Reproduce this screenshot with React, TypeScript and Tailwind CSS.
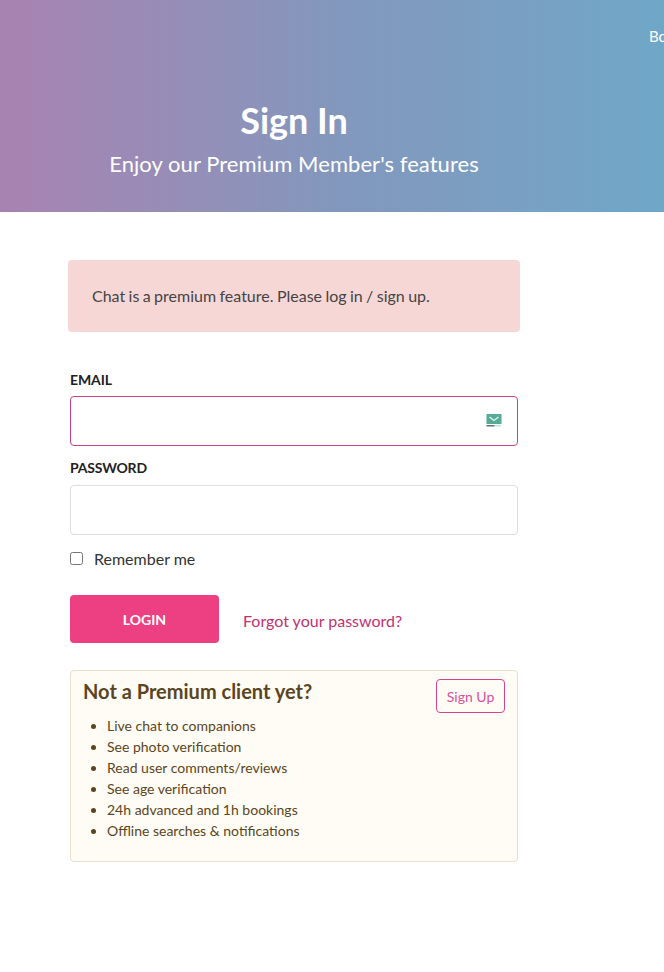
import * as React from 'react';

const perks = [
  'Live chat to companions',
  'See photo verification',
  'Read user comments/reviews',
  'See age verification',
  '24h advanced and 1h bookings',
  'Offline searches & notifications',
];

function MailBadge() {
  return (
    <svg width="16" height="14" viewBox="0 0 16 14" className="shrink-0">
      <rect x="0.5" y="0" width="15" height="10" fill="#56ab96" />
      <path d="M3.5 3 L8 6.5 L12.5 3" fill="none" stroke="#e3f4ee" strokeWidth="1.3" />
      <rect x="0.5" y="11" width="8" height="1.5" fill="#5c7676" />
      <rect x="9" y="11" width="6" height="1.5" fill="#bfe6da" />
    </svg>
  );
}

export default function App() {
  return (
    <div className="w-[664px] h-[972px] overflow-hidden bg-white font-['Lato','Carlito','Open_Sans',sans-serif]">
      {/* Header */}
      <div className="h-[212px] bg-gradient-to-r from-[#a882b1] via-[#8397bd] to-[#6fa7c7] overflow-hidden">
        <div className="pl-[649px] pt-[27px] h-[98px] w-[800px] text-[15px] leading-[18px] text-white whitespace-nowrap">
          Bookings
        </div>
        <div className="w-[588px] text-center text-white">
          <h1 className="text-[36px] leading-[44px] font-bold">Sign In</h1>
          <p className="mt-[9px] text-[22px] leading-[26px] tracking-[0.05px]">Enjoy our Premium Member's features</p>
        </div>
      </div>

      {/* Content */}
      <div className="pl-[70px] pt-[48px] w-[518px]">
        <div className="-ml-[2px] w-[452px] h-[72px] flex items-center pl-[24px] bg-[#f7d7d6] rounded-[4px] text-[16px] text-[#444444] [word-spacing:-0.7px]">
          Chat is a premium feature. Please log in / sign up.
        </div>

        <form className="mt-[39px]">
          <label className="block text-[14px] leading-[17px] font-bold text-[#222222] tracking-[-0.1px]">EMAIL</label>
          <div className="mt-[8px] h-[50px] flex items-center justify-end pr-[15px] border border-[#c4408c] rounded-[4px]">
            <MailBadge />
          </div>

          <label className="block mt-[13px] text-[14px] leading-[17px] font-bold text-[#222222] tracking-[-0.2px]">PASSWORD</label>
          <div className="mt-[9px] h-[50px] border border-[#dddddd] rounded-[4px]" />

          <label className="mt-[14px] flex items-center h-[20px] text-[16px] text-[#333333]">
            <span className="w-[13px] h-[13px] mb-[2px] border border-[#767676] rounded-[2.5px] bg-white" />
            <span className="ml-[11px]">Remember me</span>
          </label>

          <div className="mt-[26px] flex items-center">
            <button
              type="button"
              className="w-[149px] h-[48px] bg-[#ec4083] rounded-[4px] text-white text-[14px] font-bold"
            >
              LOGIN
            </button>
            <a className="ml-[24px] mt-[4px] text-[16px] text-[#c2316f]">Forgot your password?</a>
          </div>
        </form>

        {/* Upsell */}
        <div className="mt-[27px] h-[192px] border border-[#e6e0cc] rounded-[4px] bg-[#fffcf5] text-[#5a4522] pl-[12px] pr-[12px] pt-[7px]">
          <div className="flex items-start justify-between">
            <h3 className="text-[20px] leading-[26px] font-bold">Not a Premium client yet?</h3>
            <a className="mt-[1px] w-[69px] h-[34px] flex items-center justify-center border border-[#d4458e] rounded-[4px] text-[14px] text-[#d9509a]">
              Sign Up
            </a>
          </div>
          <ul className="mt-[2px] pl-[24px] list-disc text-[14px] leading-[21px]">
            {perks.map((p) => (
              <li key={p}>{p}</li>
            ))}
          </ul>
        </div>
      </div>
    </div>
  );
}
